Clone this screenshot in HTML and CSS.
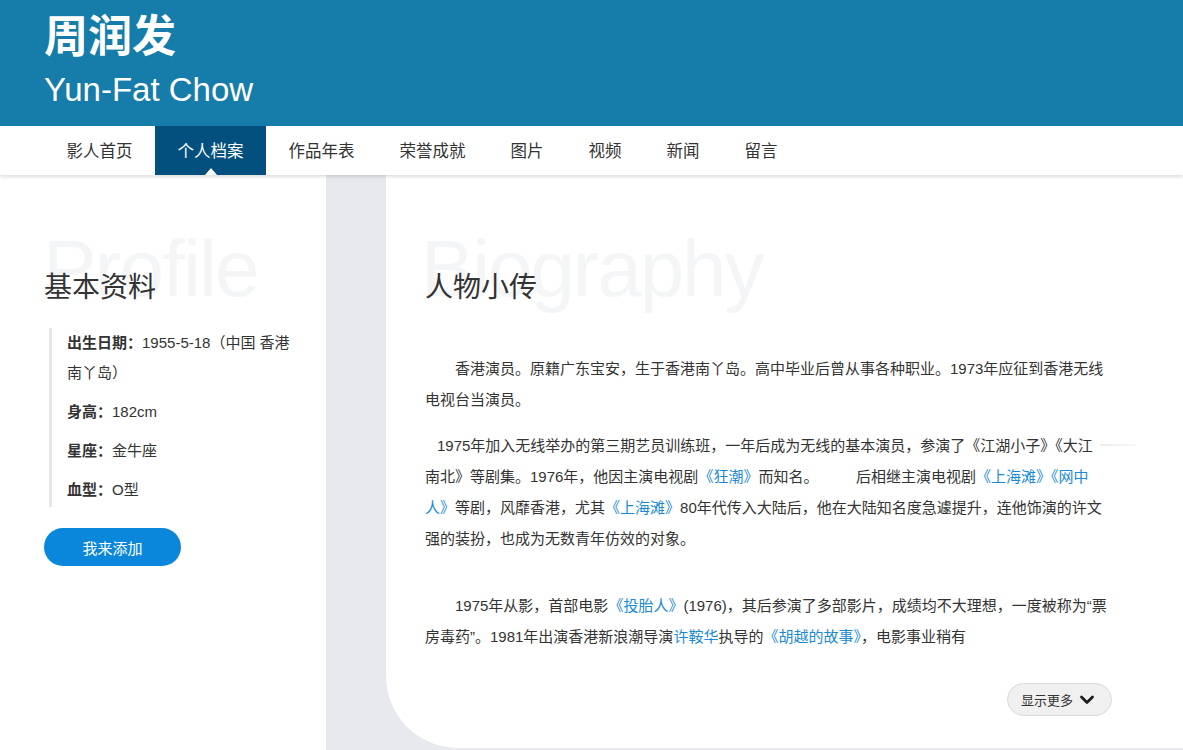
FILE: index.html
```html
<!DOCTYPE html>
<html lang="zh-CN">
<head>
<meta charset="utf-8">
<title>周润发 - 个人档案</title>
<link rel="stylesheet" href="styles.css">
</head>
<body>
<header class="hero">
  <h1 class="hero-cn">周润发</h1>
  <div class="hero-en">Yun-Fat Chow</div>
</header>
<nav class="nav">
  <a class="nav-item">影人首页</a>
  <a class="nav-item active">个人档案</a>
  <a class="nav-item">作品年表</a>
  <a class="nav-item">荣誉成就</a>
  <a class="nav-item">图片</a>
  <a class="nav-item">视频</a>
  <a class="nav-item">新闻</a>
  <a class="nav-item">留言</a>
</nav>
<div class="body">
  <aside class="side">
    <div class="sec-head">
      <span class="watermark">Profile</span>
      <h2 class="sec-title">基本资料</h2>
    </div>
    <ul class="facts">
      <li><b>出生日期：</b>1955-5-18（中国 香港南丫岛）</li>
      <li><b>身高：</b>182cm</li>
      <li><b>星座：</b>金牛座</li>
      <li><b>血型：</b>O型</li>
    </ul>
    <button class="add-btn">我来添加</button>
  </aside>
  <div class="gutter">
    <main class="main">
      <div class="sec-head">
        <span class="watermark wm-bio">Biography</span>
        <h2 class="sec-title">人物小传</h2>
      </div>
      <div class="bio">
        <p class="p-indent">香港演员。原籍广东宝安，生于香港南丫岛。高中毕业后曾从事各种职业。1973年应征到香港无线电视台当演员。</p>
        <p class="p-small">1975年加入无线举办的第三期艺员训练班，一年后成为无线的基本演员，参演了《江湖小子》《大江<br>南北》等剧集。1976年，他因主演电视剧<a class="lnk">《狂潮》</a>而知名。&nbsp;&nbsp;&nbsp;&nbsp;&nbsp;&nbsp;&nbsp;&nbsp;&nbsp;后相继主演电视剧<a class="lnk">《上海滩》《网中<br>人》</a>等剧，风靡香港，尤其<a class="lnk">《上海滩》</a>80年代传入大陆后，他在大陆知名度急遽提升，连他饰演的许文<br>强的装扮，也成为无数青年仿效的对象。</p>
        <p class="p-indent p-gap">1975年从影，首部电影<a class="lnk">《投胎人》</a>(1976)，其后参演了多部影片，成绩均不大理想，一度被称为“票房毒药”。1981年出演香港新浪潮导演<a class="lnk">许鞍华</a>执导的<a class="lnk">《胡越的故事》</a>，电影事业稍有</p>
      </div>
      <div class="more-row">
        <button class="more-btn">显示更多
          <svg class="chev" width="16" height="16" viewBox="0 0 16 16"><polyline points="2.5,5 8,10.5 13.5,5" fill="none" stroke="#1c1c1c" stroke-width="2.8" stroke-linecap="round" stroke-linejoin="round"/></svg>
        </button>
      </div>
    </main>
  </div>
</div>
</body>
</html>
```

FILE: styles.css
```css
* { box-sizing: border-box; }
html, body { margin: 0; padding: 0; }
body {
  font-family: "Liberation Sans", "Noto Sans CJK SC", sans-serif;
  color: #333;
  background: #fff;
  overflow: hidden;
}
.hero {
  background: #167ca9;
  height: 126px;
  padding: 7px 0 0 44px;
  color: #fff;
}
.hero-cn {
  margin: 0;
  font-family: "Noto Sans CJK SC", sans-serif;
  font-size: 44px;
  line-height: 52px;
  font-weight: 700;
}
.hero-en {
  margin-top: 11px;
  font-size: 33px;
  line-height: 40px;
}
.nav {
  position: relative;
  z-index: 2;
  display: flex;
  height: 49px;
  padding-left: 44px;
  background: #fff;
  box-shadow: 0 2px 3px rgba(0,0,0,0.13);
}
.nav-item {
  position: relative;
  display: block;
  padding: 0 22.5px;
  line-height: 49px;
  font-size: 16.5px;
  font-family: "Noto Sans CJK SC", sans-serif;
  color: #333;
}
.nav-item.active {
  background: #03507e;
  color: #fff;
}
.nav-item.active::after {
  content: "";
  position: absolute;
  left: 50%;
  bottom: 0;
  margin-left: -6px;
  border-left: 6px solid transparent;
  border-right: 6px solid transparent;
  border-bottom: 7px solid #fff;
}
.body {
  display: flex;
  height: 575px;
}
.side {
  width: 326px;
  flex: none;
  padding: 90px 30px 0 44px;
  background: #fff;
}
.sec-head {
  position: relative;
}
.watermark {
  position: absolute;
  left: -1px;
  top: -36px;
  font-size: 80px;
  line-height: 80px;
  letter-spacing: -1.7px;
  color: #f4f5f7;
  white-space: nowrap;
}
.wm-bio { left: -4px; letter-spacing: -2.1px; }
.sec-title {
  position: relative;
  margin: 0;
  font-family: "Noto Sans CJK SC", sans-serif;
  font-size: 28px;
  line-height: 40px;
  font-weight: 400;
  color: #333;
}
.facts {
  list-style: none;
  margin: 23px 0 0 5px;
  padding: 0 0 2px 15px;
  border-left: 3px solid #e6e6ec;
  font-size: 15px;
  line-height: 30px;
  width: 245px;
}
.facts li { margin-bottom: 9px; }
.facts li:last-child { margin-bottom: 0; }
.facts b { font-weight: 700; }
.add-btn {
  display: block;
  margin-top: 21px;
  width: 137px;
  height: 38px;
  border: none;
  border-radius: 19px;
  background: #0a87db;
  color: #fff;
  font-family: "Noto Sans CJK SC", sans-serif;
  font-size: 15px;
}
.gutter {
  flex: 1;
  background: #e8e9ee;
  padding: 0 0 2px 60px;
}
.main {
  position: relative;
  height: 573px;
  background: #fff;
  border-bottom-left-radius: 72px;
  padding: 90px 71px 0 39px;
}
.main::after {
  content: "";
  position: absolute;
  top: 269px;
  left: 714px;
  width: 36px;
  height: 2px;
  background: linear-gradient(to right, #ececec, #f7f7f7);
}
.bio {
  margin-top: 48px;
  font-size: 15px;
  line-height: 31px;
  color: #333;
}
.bio p { margin: 0 0 15px 0; }
.p-indent { text-indent: 2em; }
.p-small { text-indent: 12px; }
.bio .p-gap { margin-top: 36px; margin-bottom: 0; }
.lnk { color: #1a8ad6; text-decoration: none; }
.more-row {
  display: flex;
  justify-content: flex-end;
  margin-top: 31px;
}
.more-btn {
  display: flex;
  align-items: center;
  gap: 6px;
  height: 33px;
  padding: 0 16px 0 13px;
  border: 1px solid #d9d9d9;
  border-radius: 17px;
  background: #f0f0f0;
  color: #333;
  font-family: "Noto Sans CJK SC", sans-serif;
  font-size: 13px;
}
.chev { display: block; }
```
